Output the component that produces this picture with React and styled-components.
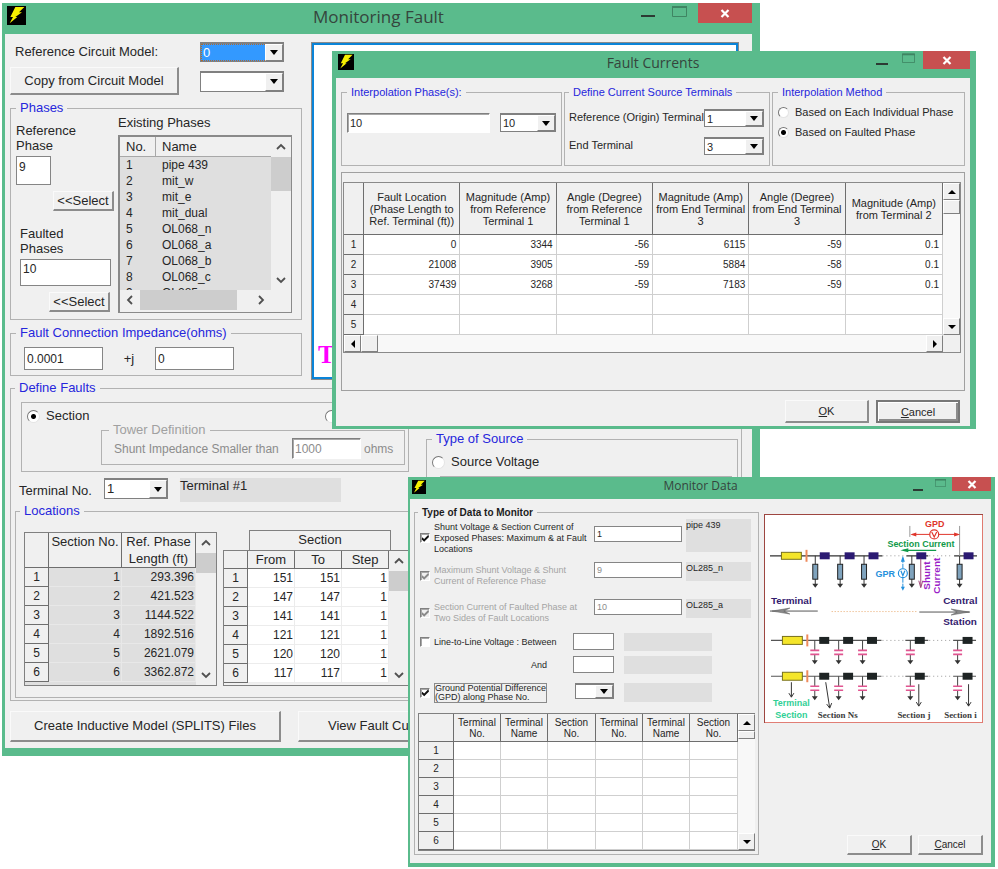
import { useId } from "react";
import styled, { createGlobalStyle, css } from "styled-components";

const existingPhases = [
  "pipe 439",
  "mit_w",
  "mit_e",
  "mit_dual",
  "OL068_n",
  "OL068_a",
  "OL068_b",
  "OL068_c",
  "OL285_n",
];

const refLengths = ["293.396", "421.523", "1144.522", "1892.516", "2621.079", "3362.872"];
const sectionNumbers = [151, 147, 141, 121, 120, 117];

const currentHeaders = [
  "Fault Location (Phase Length to Ref. Terminal (ft))",
  "Magnitude (Amp) from Reference Terminal 1",
  "Angle (Degree) from Reference Terminal 1",
  "Magnitude (Amp) from End Terminal 3",
  "Angle (Degree) from End Terminal 3",
  "Magnitude (Amp) from Terminal 2",
];

const currentRows = [
  ["0", "3344", "-56", "6115", "-59", "0.1"],
  ["21008", "3905", "-59", "5884", "-58", "0.1"],
  ["37439", "3268", "-59", "7183", "-59", "0.1"],
  ["", "", "", "", "", ""],
  ["", "", "", "", "", ""],
];

const monitorHeaders = [
  "Terminal No.",
  "Terminal Name",
  "Section No.",
  "Terminal No.",
  "Terminal Name",
  "Section No.",
];
const monitorRows = Array.from({ length: 6 }, () => ["", "", "", "", "", ""]);

export default function App() {
  return (
    <>
      <GlobalStyle />
      <Desktop>
        <MonitoringFault />
        <FaultCurrents />
        <MonitorData />
      </Desktop>
    </>
  );
}

function Window({ title, children, ...frame }) {
  return (
    <WindowFrame aria-label={title} {...frame}>
      <TitleBar $height={frame.$bar}>
        <BoltIcon size={frame.$icon} />
        <Title $size={frame.$titleSize} $line={frame.$bar - 4}>
          {title}
        </Title>
        <TitleControls $gap={frame.$gap}>
          <TitleButton aria-label="Minimize">
            <svg width={frame.$glyph} height="16" viewBox="0 0 14 16" preserveAspectRatio="none">
              <path d="M0 12h14v2H0z" fill="#2c3a33" />
            </svg>
          </TitleButton>
          <TitleButton aria-label="Maximize">
            <svg width={frame.$glyph + 1} height={frame.$glyph} viewBox="0 0 15 14" preserveAspectRatio="none">
              <path d="M.5 3.500h14v10H.5z" fill="none" stroke="#3f8563" />
              <path d="M0 3h15v2H0z" fill="#3f8563" />
            </svg>
          </TitleButton>
          <CloseButton aria-label="Close" $width={frame.$closeWidth} $height={frame.$closeHeight}>
            <svg width="10" height="9" viewBox="0 0 10 9">
              <path d="M1.500 1l7 7M8.500 1l-7 7" stroke="#fff" strokeWidth="2.200" />
            </svg>
          </CloseButton>
        </TitleControls>
      </TitleBar>
      <WindowBody>{children}</WindowBody>
    </WindowFrame>
  );
}

function BoltIcon({ size }) {
  return (
    <BoltSvg width={size} height={size} viewBox="0 0 57 57">
      <path d="M0 0h57v57H0z" fill="#000" />
      <path d="M25 3h27L36 19h9L25 33h6L8 52l10-19h-8z" fill="#f6f000" />
    </BoltSvg>
  );
}

function Combo({ label, value, id, ...props }) {
  return (
    <ComboFrame {...props}>
      <ComboSelect id={id} aria-label={label} defaultValue={value} $active={props.$active}>
        <option>{value}</option>
      </ComboSelect>
      <ComboArrow>
        <svg width="8" height="5" viewBox="0 0 8 5">
          <path d="M0 0h8L4 5z" fill="#000" />
        </svg>
      </ComboArrow>
    </ComboFrame>
  );
}

const arrowPaths = {
  up: ["M1 7l4-4 4 4", "M1 7h8L5 3z"],
  down: ["M1 3l4 4 4-4", "M1 3h8L5 7z"],
  left: ["M7 1L3 5l4 4", "M7 1v8L3 5z"],
  right: ["M3 1l4 4-4 4", "M3 1v8l4-4z"],
};

function ScrollArrow({ to, classic }) {
  return (
    <ArrowButton aria-label={"Scroll " + to} $classic={classic}>
      <svg width="10" height="10" viewBox="0 0 10 10">
        {classic ? (
          <path d={arrowPaths[to][1]} fill="#000" />
        ) : (
          <path d={arrowPaths[to][0]} fill="none" stroke="#505050" strokeWidth="1.800" />
        )}
      </svg>
    </ArrowButton>
  );
}

function ScrollBar({ horizontal, classic, thumb }) {
  return (
    <ScrollTrack $horizontal={horizontal} $classic={classic}>
      <ScrollArrow to={horizontal ? "left" : "up"} classic={classic} />
      <ScrollLane $horizontal={horizontal}>
        <ScrollThumb $horizontal={horizontal} $classic={classic} $length={thumb} />
      </ScrollLane>
      <ScrollArrow to={horizontal ? "right" : "down"} classic={classic} />
    </ScrollTrack>
  );
}

function DataTable({ label, headers, rows, widths, ...look }) {
  return (
    <Table aria-label={label} {...look}>
      <colgroup>
        {widths.map((width, i) => (
          <col key={i} width={width} />
        ))}
      </colgroup>
      <thead>
        <tr>
          <th />
          {headers.map((header, i) => (
            <th key={i} scope="col">
              {header}
            </th>
          ))}
        </tr>
      </thead>
      <tbody>
        {rows.map((row, i) => (
          <tr key={i}>
            <th scope="row">{i + 1}</th>
            {row.map((cell, j) => (
              <td key={j}>{cell}</td>
            ))}
          </tr>
        ))}
      </tbody>
    </Table>
  );
}

function MonitoringFault() {
  const id = useId();
  return (
    <Window
      title="Monitoring Fault"
      $left={2}
      $top={3}
      $width={758}
      $height={751}
      $edges="0 8px 8px 3px"
      $bar={31}
      $icon={19}
      $titleSize={17}
      $glyph={14}
      $gap={17}
      $closeWidth={54}
      $closeHeight={20}
      $font={13}
      $line={14}
    >
      <FaultBody>
        <FaultTop>
          <PhaseColumn>
            <CircuitGrid>
              <ModelLabel htmlFor={id + "model"}>Reference Circuit Model:</ModelLabel>
              <Combo id={id + "model"} value="0" $width={84} $height={20} $active />
              <Button>Copy from Circuit Model</Button>
              <Combo label="Circuit model to copy" value="" $width={84} $height={21} />
            </CircuitGrid>
            <PhasesGroup>
              <Legend>Phases</Legend>
              <PhaseFields>
                <FieldLabel htmlFor={id + "ref"}>
                  Reference
                  <br />
                  Phase
                </FieldLabel>
                <TextBox id={id + "ref"} defaultValue="9" $width={35} $height={29} />
                <SelectButton>&lt;&lt;Select</SelectButton>
                <FaultedFields>
                  <FieldLabel htmlFor={id + "faulted"}>
                    Faulted
                    <br />
                    Phases
                  </FieldLabel>
                  <TextBox id={id + "faulted"} defaultValue="10" $width={91} $height={27} />
                  <SelectButton>&lt;&lt;Select</SelectButton>
                </FaultedFields>
              </PhaseFields>
              <div>
                <div>Existing Phases</div>
                <PhaseList>
                  <PhaseListBody>
                    <PhaseTable aria-label="Existing Phases">
                      <thead>
                        <tr>
                          <th>No.</th>
                          <th>Name</th>
                        </tr>
                      </thead>
                      <tbody>
                        {existingPhases.map((name, i) => (
                          <tr key={name}>
                            <td>{i + 1}</td>
                            <td>{name}</td>
                          </tr>
                        ))}
                      </tbody>
                    </PhaseTable>
                    <ScrollBar thumb={34} />
                  </PhaseListBody>
                  <ListFooter>
                    <ScrollBar horizontal thumb={97} />
                  </ListFooter>
                </PhaseList>
              </div>
            </PhasesGroup>
            <ImpedanceGroup>
              <Legend>Fault Connection Impedance(ohms)</Legend>
              <ImpedanceFields>
                <TextBox aria-label="Resistance" defaultValue="0.0001" $width={79} $height={23} />
                <span>+j</span>
                <TextBox aria-label="Reactance" defaultValue="0" $width={79} $height={23} />
              </ImpedanceFields>
            </ImpedanceGroup>
          </PhaseColumn>
          <CircuitView>Terminal</CircuitView>
        </FaultTop>

        <DefineGroup>
          <Legend>Define Faults</Legend>
          <div>
            <FaultTypeBox>
              <FaultTypeRow>
                <Choice>
                  <Radio type="radio" name="faultType" defaultChecked />
                  Section
                </Choice>
                <Choice>
                  <Radio type="radio" name="faultType" />
                  Tower
                </Choice>
              </FaultTypeRow>
              <TowerGroup disabled>
                <Legend $muted>Tower Definition</Legend>
                <ShuntFields>
                  <label htmlFor={id + "shunt"}>Shunt Impedance Smaller than</label>
                  <TextBox id={id + "shunt"} defaultValue="1000" $width={69} $height={21} $sunken />
                  <span>ohms</span>
                </ShuntFields>
              </TowerGroup>
            </FaultTypeBox>
            <TerminalRow>
              <label htmlFor={id + "terminal"}>Terminal No.</label>
              <Combo id={id + "terminal"} value="1" $width={64} $height={21} />
              <Readout $width={161} $height={24}>
                Terminal #1
              </Readout>
            </TerminalRow>
            <LocationsGroup>
              <Legend>Locations</Legend>
              <LocationTables>
                <LengthGrid>
                  <DataTable
                    label="Section lengths"
                    headers={["Section No.", "Ref. Phase Length (ft)"]}
                    rows={refLengths.map((length, i) => [i + 1, length])}
                    widths={[24, 73, 74]}
                    $head={35}
                    $row={19}
                    $cell="#dfdfdf"
                    $rule="#e8e8e8"
                    $digits={12}
                    $topHead
                  />
                  <ScrollBar thumb={20} />
                </LengthGrid>
                <SectionColumn>
                  <SectionCaption>Section</SectionCaption>
                  <SectionGrid>
                    <DataTable
                      label="Sections"
                      headers={["From", "To", "Step"]}
                      rows={sectionNumbers.map((n) => [n, n, 1])}
                      widths={[24, 47, 47, 47]}
                      $head={18}
                      $row={19}
                      $cell="#fff"
                      $rule="#ececec"
                      $digits={12}
                    />
                    <ScrollBar thumb={20} />
                  </SectionGrid>
                </SectionColumn>
              </LocationTables>
            </LocationsGroup>
          </div>
          <SourceGroup>
            <Legend>Type of Source</Legend>
            <Choice>
              <Radio type="radio" name="source" />
              Source Voltage
            </Choice>
            <SourceBox />
          </SourceGroup>
        </DefineGroup>

        <FaultActions>
          <Button $width={271}>Create Inductive Model (SPLITS) Files</Button>
          <Button $width={175}>View Fault Currents</Button>
        </FaultActions>
      </FaultBody>
    </Window>
  );
}

function FaultCurrents() {
  const id = useId();
  return (
    <Window
      title="Fault Currents"
      $left={332}
      $top={51}
      $width={644}
      $height={378}
      $edges="0 6px 3px 4px"
      $bar={27}
      $icon={16}
      $titleSize={14}
      $glyph={12}
      $gap={14}
      $closeWidth={47}
      $closeHeight={18}
      $font={11}
      $line={12}
    >
      <CurrentsBody>
        <CurrentsTop>
          <InterpolationGroup>
            <Legend>Interpolation Phase(s):</Legend>
            <InterpolationFields>
              <TextBox aria-label="Interpolation phases" defaultValue="10" $width={143} $height={20} $sunken />
              <Combo label="Phase" value="10" $width={56} $height={19} />
            </InterpolationFields>
          </InterpolationGroup>
          <TerminalsGroup>
            <Legend>Define Current Source Terminals</Legend>
            <label htmlFor={id + "origin"}>Reference (Origin) Terminal</label>
            <Combo id={id + "origin"} value="1" $width={60} $height={18} />
            <label htmlFor={id + "end"}>End Terminal</label>
            <Combo id={id + "end"} value="3" $width={60} $height={18} />
          </TerminalsGroup>
          <MethodGroup>
            <Legend>Interpolation Method</Legend>
            <Choice>
              <Radio type="radio" name="method" $size={11} />
              Based on Each Individual Phase
            </Choice>
            <Choice>
              <Radio type="radio" name="method" $size={11} defaultChecked />
              Based on Faulted Phase
            </Choice>
          </MethodGroup>
        </CurrentsTop>
        <CurrentsPanel>
          <CurrentsGrid>
            <DataTable
              label="Fault currents"
              headers={currentHeaders}
              rows={currentRows}
              widths={[20, 96, 96, 96, 96, 96, 97]}
              $head={52}
              $row={20}
              $cell="#fff"
              $rule="#cfcfcf"
              $digits={10}
              $pad={3}
            />
            <ScrollBar classic thumb={14} />
            <ScrollBar classic horizontal thumb={17} />
          </CurrentsGrid>
        </CurrentsPanel>
        <CurrentsActions>
          <Button $width={84}>
            <u>O</u>K
          </Button>
          <Button $width={84} $default>
            <u>C</u>ancel
          </Button>
        </CurrentsActions>
      </CurrentsBody>
    </Window>
  );
}

function MonitorData() {
  const id = useId();
  return (
    <Window
      title="Monitor Data"
      $left={408}
      $top={477}
      $width={587}
      $height={388}
      $edges="0 4px 4px 2px"
      $bar={22}
      $icon={14}
      $titleSize={12}
      $glyph={10}
      $gap={12}
      $closeWidth={39}
      $closeHeight={14}
      $font={10}
      $line={11}
    >
      <MonitorBody>
        <DataGroup>
          <Legend $strong>Type of Data to Monitor</Legend>
          <MonitorRow $height={38}>
            <MonitorChoice>
              <Check type="checkbox" defaultChecked />
              <span>
                Shunt Voltage &amp; Section Current of
                <br />
                Exposed Phases: Maximum &amp; at Fault
                <br />
                Locations
              </span>
            </MonitorChoice>
            <TextBox aria-label="Exposed phase" defaultValue="1" $width={88} $height={16} $drop={7} />
            <Readout $width={65} $height={33}>
              pipe 439
            </Readout>
          </MonitorRow>
          <MonitorRow $height={28} $space={5}>
            <MonitorChoice $muted>
              <Check type="checkbox" defaultChecked disabled />
              <span>
                Maximum Shunt Voltage &amp; Shunt
                <br />
                Current of Reference Phase
              </span>
            </MonitorChoice>
            <TextBox aria-label="Reference phase" defaultValue="9" disabled $width={88} $height={16} />
            <Readout $width={65} $height={19}>
              OL285_n
            </Readout>
          </MonitorRow>
          <MonitorRow $height={28} $space={9}>
            <MonitorChoice $muted>
              <Check type="checkbox" defaultChecked disabled />
              <span>
                Section Current of Faulted Phase at
                <br />
                Two Sides of Fault Locations
              </span>
            </MonitorChoice>
            <TextBox aria-label="Faulted phase" defaultValue="10" disabled $width={88} $height={16} />
            <Readout $width={65} $height={19}>
              OL285_a
            </Readout>
          </MonitorRow>
          <MonitorRow $height={18} $space={6} $short>
            <MonitorChoice>
              <Check type="checkbox" />
              <span>Line-to-Line Voltage : Between</span>
            </MonitorChoice>
            <TextBox aria-label="First phase" $width={41} $height={17} />
            <Readout $width={88} $height={18} />
          </MonitorRow>
          <MonitorRow $height={18} $space={5} $short>
            <AndLabel htmlFor={id + "and"}>And</AndLabel>
            <TextBox id={id + "and"} $width={41} $height={17} />
            <Readout $width={88} $height={18} />
          </MonitorRow>
          <MonitorRow $height={19} $space={9} $short>
            <MonitorChoice>
              <Check type="checkbox" defaultChecked />
              <FocusText>
                Ground Potential Difference
                <br />
                (GPD) along Phase No.
              </FocusText>
            </MonitorChoice>
            <Combo label="Phase number" value="" $width={39} $height={16} />
            <Readout $width={88} $height={19} />
          </MonitorRow>
          <MonitorGrid>
            <DataTable
              label="Monitored sections"
              headers={monitorHeaders}
              rows={monitorRows}
              widths={[35, 47, 47, 48, 47, 47, 48]}
              $head={28}
              $row={18}
              $cell="#fff"
              $rule="#cfcfcf"
              $digits={10}
            />
            <ScrollBar classic thumb={8} />
          </MonitorGrid>
        </DataGroup>
        <MonitorSide>
          <CircuitDiagram />
          <MonitorActions>
            <Button $width={65}>
              <u>O</u>K
            </Button>
            <Button $width={65}>
              <u>C</u>ancel
            </Button>
          </MonitorActions>
        </MonitorSide>
      </MonitorBody>
    </Window>
  );
}

// One conductor of the diagram with its capacitive shunts
function CapacitorLine({ y, drop }) {
  return (
    <g>
      <path d={`M7 ${y}H118M142 ${y}h23M190 ${y}h23`} stroke="#555" strokeWidth="1.200" />
      <path d={`M119 ${y}h22M166 ${y}h23`} stroke="#999" strokeDasharray="1 3" />
      <rect x="18.500" y={y - 4} width="20" height="8" fill="#f4e52a" stroke="#77701c" />
      <path d={`M43.500 ${y - 6}v12`} stroke="#ee8a5c" strokeWidth="2" />
      {[55.5, 79.5, 103.5, 151.5, 199.5].map((x) => (
        <rect key={x} x={x} y={y - 3.5} width="10" height="7" fill="#1e2424" />
      ))}
      {[51, 75, 99, 147, 194.5].map((x) => (
        <g key={x}>
          <path d={`M${x} ${y}v${drop}M${x} ${y + drop + 4}v7`} stroke="#444" />
          <path
            d={`M${x - 4.5} ${y + drop}h9M${x - 4.5} ${y + drop + 4}h9`}
            stroke="#e05590"
            strokeWidth="1.600"
          />
          <path d={`M${x - 3} ${y + drop + 10}h6l-3 4z`} fill="#333" />
        </g>
      ))}
    </g>
  );
}

function CircuitDiagram() {
  return (
    <DiagramSvg viewBox="0 0 220 210" role="img" aria-label="Circuit diagram">
      <rect x=".5" y=".5" width="219" height="209" fill="#fff" stroke="#e07a70" />
      <path d="M0 .5h220M.5 0v210" stroke="#9c4640" />

      <path d="M6 42h113M143 42h22M191 42h23" stroke="#333" strokeWidth="1.200" />
      <path d="M119 42h22M166 42h24" stroke="#999" strokeDasharray="1 3" />
      <rect x="17.500" y="38.500" width="20" height="7" fill="#f4e52a" stroke="#77701c" />
      <path d="M42.700 36v12" stroke="#ee8a5c" strokeWidth="2" />
      {[56, 81, 105, 153, 200.5].map((x) => (
        <rect key={x} x={x} y="38.500" width="10" height="7" fill="#2b1a72" />
      ))}
      {[51.5, 76.5, 100.5, 148.5, 196.5].map((x) => (
        <g key={x}>
          <path d={`M${x} 42v30`} stroke="#333" />
          <rect x={x - 2.5} y="50.500" width="5" height="15" fill="#7fa3bd" stroke="#222" />
          <path d={`M${x - 3} 70h6l-3 4z`} fill="#333" />
        </g>
      ))}

      <path d="M146.500 12v11M196.500 12v30" stroke="#999" />
      <path d="M149 20.500h46" stroke="#e0352b" />
      <path d="M147 20.500l6-2v4zM197 20.500l-6-2v4z" fill="#e0352b" />
      <circle cx="171" cy="20.500" r="4.500" fill="#fff" stroke="#e0352b" strokeWidth="1.200" />
      <path d="M168.500 18l2.500 5 2.500-5" fill="none" stroke="#e0352b" strokeWidth="1.200" />
      <DiagramText x="171.500" y="13" $color="#e0352b" $center>
        GPD
      </DiagramText>
      <DiagramText x="124" y="33" $color="#109a4a">
        Section Current
      </DiagramText>
      <path d="M140 36.500h33" stroke="#109a4a" strokeWidth="1.200" />
      <path d="M137 36.500l8-2v4z" fill="#109a4a" />

      <DiagramText x="112" y="63" $color="#2590dc">
        GPR
      </DiagramText>
      <path d="M139.500 44v12M139.500 64v11" stroke="#2590dc" strokeDasharray="5 1" />
      <path d="M139.500 42l-2 6h4zM139.500 77l-2-4h4z" fill="#2590dc" />
      <circle cx="139.500" cy="59.500" r="4.500" fill="#fff" stroke="#2590dc" strokeWidth="1.200" />
      <path d="M137.500 57l2 5 2-5" fill="none" stroke="#2590dc" strokeWidth="1.200" />

      <path d="M157.500 45v28M155.500 67l2 7 2-7" fill="none" stroke="#a04878" />
      <DiagramText transform="translate(167 76) rotate(-90)" $color="#9a1fc8" $size={10}>
        Shunt
      </DiagramText>
      <DiagramText transform="translate(177 80) rotate(-90)" $color="#9a1fc8" $size={10}>
        Current
      </DiagramText>

      <DiagramText x="7" y="90" $color="#33206e" $size={10}>
        Terminal
      </DiagramText>
      <DiagramText x="180" y="90" $color="#33206e" $size={10}>
        Central
      </DiagramText>
      <DiagramText x="180" y="112" $color="#33206e" $size={10}>
        Station
      </DiagramText>
      <path d="M6 97.500h48M156 98.500h51" stroke="#555" />
      <path d="M8 97.500l18-3-6 3 6 3zM206 98.500l-18-3 6 3-6 3z" fill="#888" stroke="#555" strokeWidth=".5" />
      <path d="M68 98h87" stroke="#e8a86c" strokeDasharray="1 2" />

      <CapacitorLine y={127} drop={10} />
      <CapacitorLine y={163} drop={10} />

      <g fill="none" stroke="#333">
        <path d="M27.500 169v15M25 180l2.500 4 2.500-4" />
        <path d="M62 169l4 26M63 191l3 4 2-5" />
        <path d="M155.500 171v22M153 189l2.500 4 2.500-4" />
        <path d="M205.500 171v22M203 189l2.500 4 2.500-4" />
      </g>
      <DiagramText x="27.500" y="193" $color="#2fcf95" $center>
        Terminal
      </DiagramText>
      <DiagramText x="27.500" y="205" $color="#2fcf95" $center>
        Section
      </DiagramText>
      <DiagramText x="54" y="205" $color="#3a3a3a" $serif>
        Section Ns
      </DiagramText>
      <DiagramText x="134" y="205" $color="#3a3a3a" $serif>
        Section j
      </DiagramText>
      <DiagramText x="181" y="205" $color="#3a3a3a" $serif>
        Section i
      </DiagramText>
    </DiagramSvg>
  );
}

const GlobalStyle = createGlobalStyle`
  * {
    box-sizing: border-box;
  }

  body {
    margin: 0;
    background: #fff;
    color: #262626;
    font-family: "Liberation Sans", Arial, sans-serif;
  }

  button, input, select {
    margin: 0;
    padding: 0;
    color: inherit;
    font: inherit;
  }
`;

const sunken = css`
  border: 1px solid;
  border-color: #808080 #fff #fff #808080;
  box-shadow: inset 1px 1px 0 #a8a8a8;
`;

const Desktop = styled.main`
  position: relative;
  min-height: 100vh;
  overflow: hidden;
`;

const WindowFrame = styled.section`
  position: absolute;
  left: ${(props) => props.$left}px;
  top: ${(props) => props.$top}px;
  width: ${(props) => props.$width}px;
  min-height: ${(props) => props.$height}px;
  display: flex;
  flex-direction: column;
  border: solid #5abb8c;
  border-width: ${(props) => props.$edges};
  background: #f0f0f0;
  font-size: ${(props) => props.$font}px;
  line-height: ${(props) => props.$line}px;
`;

const TitleBar = styled.header`
  height: ${(props) => props.$height}px;
  display: grid;
  grid-template-columns: 1fr auto 1fr;
  background: #5abb8c;
`;

const BoltSvg = styled.svg`
  margin: 3px 2px;
`;

const Title = styled.h1`
  margin: 0;
  color: #35453d;
  font: ${(props) => props.$size}px "Open Sans", sans-serif;
  line-height: ${(props) => props.$line}px;
`;

const TitleControls = styled.div`
  display: flex;
  justify-content: flex-end;
  align-items: flex-start;
  gap: ${(props) => props.$gap}px;
`;

const TitleButton = styled.button`
  display: flex;
  border: 0;
  background: none;
`;

const CloseButton = styled(TitleButton)`
  width: ${(props) => props.$width}px;
  height: ${(props) => props.$height}px;
  margin-left: -6px;
  align-items: center;
  justify-content: center;
  background: #c75050;
`;

const WindowBody = styled.div`
  flex: 1;
  display: flex;
  flex-direction: column;
`;

const Group = styled.fieldset`
  min-width: 0;
  margin: 0;
  padding: 0;
  border: 1px solid #b2b2b2;
`;

const Legend = styled.legend`
  padding: 0 4px;
  color: ${(props) => (props.$muted ? "#a0a0a0" : props.$strong ? "#1c1c1c" : "#2626dc")};
  font-weight: ${(props) => (props.$strong ? "bold" : "normal")};
`;

const Button = styled.button`
  width: ${(props) => (props.$width ? props.$width + "px" : "auto")};
  border: solid;
  border-width: 1px 2px 2px 1px;
  border-color: #fafafa #8c8c8c #8c8c8c #fafafa;
  background: #f0f0f0;
  white-space: nowrap;
  ${(props) =>
    props.$default &&
    css`
      border-width: 2px;
      border-color: #777;
      box-shadow: inset 1px 1px 0 #fff, inset -2px -2px 0 #8c8c8c;
    `}
`;

const TextBox = styled.input`
  width: ${(props) => props.$width}px;
  height: ${(props) => props.$height}px;
  margin-top: ${(props) => props.$drop || 0}px;
  padding: 0 2px;
  border: 1px solid #858585;
  background: #fff;
  ${(props) => props.$sunken && sunken}

  &:disabled {
    color: #8c8c8c;
  }
`;

const ComboFrame = styled.span`
  width: ${(props) => props.$width}px;
  height: ${(props) => props.$height}px;
  display: grid;
  border: 1px solid #808080;
  border-top-width: 2px;
  background: #fff;
`;

const ComboSelect = styled.select`
  grid-area: 1 / 1;
  width: 100%;
  min-width: 0;
  padding: 0 2px;
  appearance: none;
  border: 0;
  border-radius: 0;
  background: ${(props) => (props.$active ? "#3399ff" : "#fff")};
  color: ${(props) => (props.$active ? "#fff" : "inherit")};
  outline: ${(props) => (props.$active ? "1px dotted #b06a30" : "none")};
  outline-offset: -1px;
`;

const ComboArrow = styled.span`
  grid-area: 1 / 1;
  justify-self: end;
  width: 18px;
  display: flex;
  align-items: center;
  justify-content: center;
  border: 1px solid;
  border-color: #fff #808080 #808080 #fff;
  background: #f0f0f0;
  pointer-events: none;
`;

const Choice = styled.label`
  display: flex;
  align-items: center;
  gap: 6px;
`;

const Radio = styled.input`
  flex: none;
  width: ${(props) => props.$size || 13}px;
  height: ${(props) => props.$size || 13}px;
  appearance: none;
  border: 1px solid;
  border-color: #777 #e4e4e4 #e4e4e4 #777;
  border-radius: 50%;
  background: #fff;

  &:checked {
    background: radial-gradient(circle, #000 0 2px, #fff 3px);
  }
`;

const Check = styled.input`
  flex: none;
  width: 10px;
  height: 10px;
  display: flex;
  appearance: none;
  ${sunken}
  background: #fff;

  &:checked::before {
    content: "";
    width: 8px;
    height: 8px;
    background: #111;
    clip-path: polygon(14% 40%, 40% 62%, 92% 10%, 100% 36%, 40% 96%, 10% 68%);
  }

  &:disabled {
    background: #f0f0f0;
  }

  &:disabled::before {
    background: #8a8a8a;
  }
`;

const Readout = styled.output`
  width: ${(props) => props.$width}px;
  height: ${(props) => props.$height}px;
  padding-top: 1px;
  background: #dfdfdf;
`;

const ScrollTrack = styled.div`
  display: flex;
  flex-direction: ${(props) => (props.$horizontal ? "row" : "column")};
  ${(props) => (props.$horizontal ? "height" : "width")}: ${(props) => (props.$classic ? 17 : 20)}px;
  background: ${(props) => (props.$classic ? "#f8f8f8" : "#f0f0f0")};
`;

const ScrollLane = styled.div`
  flex: 1;
  display: flex;
  flex-direction: ${(props) => (props.$horizontal ? "row" : "column")};
`;

const ScrollThumb = styled.div`
  ${(props) => (props.$horizontal ? "width" : "height")}: ${(props) => props.$length}px;
  background: #cdcdcd;
  ${(props) =>
    props.$classic &&
    css`
      border: 1px solid;
      border-color: #fff #808080 #808080 #fff;
      background: #f0f0f0;
    `}
`;

const ArrowButton = styled.button`
  width: ${(props) => (props.$classic ? 17 : 20)}px;
  height: ${(props) => (props.$classic ? 17 : 20)}px;
  display: flex;
  align-items: center;
  justify-content: center;
  border: ${(props) => (props.$classic ? 1 : 0)}px solid;
  border-color: #fff #808080 #808080 #fff;
  background: #f0f0f0;
`;

const Table = styled.table`
  align-self: start;
  width: 100%;
  table-layout: fixed;
  border-collapse: separate;
  border-spacing: 0;

  th, td {
    padding: 0;
    border: solid;
    border-width: 0 1px 1px 0;
    overflow: hidden;
  }

  th {
    border-color: #6e6e6e;
    background: #f0f0f0;
    font-weight: normal;
  }

  thead th {
    height: ${(props) => props.$head}px;
    vertical-align: ${(props) => (props.$topHead ? "top" : "middle")};
    line-height: ${(props) => (props.$topHead ? "17px" : "inherit")};
  }

  tbody tr {
    height: ${(props) => props.$row}px;
  }

  tbody th, td {
    font-size: ${(props) => props.$digits}px;
  }

  td {
    padding-right: ${(props) => props.$pad || 1}px;
    border-color: ${(props) => props.$rule};
    background: ${(props) => props.$cell};
    text-align: right;
  }
`;

/* Monitoring Fault */

const FaultBody = styled.div`
  padding: 8px 10px 6px 5px;

  input {
    font-size: 12px;
  }
`;

const FaultTop = styled.div`
  display: flex;
  gap: 9px;
  min-height: 338px;
`;

const PhaseColumn = styled.div`
  width: 292px;
`;

const CircuitGrid = styled.div`
  display: grid;
  grid-template-columns: 169px 84px;
  grid-template-rows: 20px 28px;
  gap: 5px 21px;
  align-items: center;

  button {
    height: 100%;
  }
`;

const ModelLabel = styled.label`
  padding-left: 5px;
`;

const PhasesGroup = styled(Group)`
  display: grid;
  grid-template-columns: 98px 1fr;
  gap: 4px;
  margin-top: 6px;
  padding: 1px 9px 6px 5px;
`;

const PhaseFields = styled.div`
  display: flex;
  flex-direction: column;
  align-items: flex-start;
  padding-top: 7px;

  input {
    padding-bottom: 8px;
  }
`;

const FaultedFields = styled.div`
  width: 94px;
  display: flex;
  flex-direction: column;
  align-items: flex-start;
  margin: 15px 0 0 4px;
  padding-right: 4px;
`;

const FieldLabel = styled.label`
  margin-bottom: 3px;
  line-height: 15px;
`;

const SelectButton = styled(Button)`
  align-self: flex-end;
  width: 61px;
  height: 20px;
  margin-top: 6px;
`;

const PhaseList = styled.div`
  margin-top: 5px;
  border: 2px solid #8a8a8a;
  border-width: 2px 1px 1px 2px;
`;

const PhaseListBody = styled.div`
  height: 153px;
  display: grid;
  grid-template-columns: 1fr 20px;
  grid-template-rows: 100%;
  overflow: hidden;
`;

const PhaseTable = styled.table`
  align-self: start;
  width: 100%;
  border-collapse: separate;
  border-spacing: 0;
  background: #dfdfdf;
  line-height: 16px;

  th {
    height: 20px;
    padding: 0 6px;
    border-right: 1px solid #a8a8a8;
    border-bottom: 1px solid #a8a8a8;
    background: #f0f0f0;
    font-weight: normal;
    text-align: left;
  }

  th:first-child {
    width: 36px;
  }

  th:last-child {
    border-right: 0;
  }

  td {
    padding: 0 6px;
    font-size: 12px;
  }
`;

const ListFooter = styled.div`
  height: 22px;
  padding-right: 20px;
`;

const ImpedanceGroup = styled(Group)`
  padding: 7px 5px 5px;
  margin-top: 6px;
`;

const ImpedanceFields = styled.div`
  display: flex;
  align-items: center;
  margin-left: 8px;

  span {
    width: 52px;
    text-align: center;
  }
`;

const CircuitView = styled.div`
  flex: 1;
  margin-right: 3px;
  padding: 0 4px 10px;
  display: flex;
  align-items: flex-end;
  border: 3px solid #0a84d8;
  outline: 1px solid #8a8a8a;
  outline-offset: -1px;
  background: #fff;
  color: #ff00ff;
  font: bold 25px "Liberation Serif", serif;
  line-height: 25px;
`;

const DefineGroup = styled(Group)`
  display: flex;
  gap: 11px;
  margin-top: 1px;
  padding: 7px 3px 2px 4px;
`;

const FaultTypeBox = styled.div`
  width: 388px;
  margin-left: 6px;
  padding: 6px 3px 6px 5px;
  border: 1px solid #b2b2b2;
`;

const FaultTypeRow = styled.div`
  display: flex;
  gap: 236px;
`;

const TowerGroup = styled(Group)`
  margin-left: 74px;
  padding: 1px 4px 5px 7px;
  color: #8c8c8c;
  white-space: nowrap;
`;

const ShuntFields = styled.div`
  display: flex;
  align-items: center;
  margin-left: 5px;
  font-size: 12px;

  label {
    width: 178px;
  }

  span {
    margin-left: 3px;
  }
`;

const TerminalRow = styled.div`
  display: flex;
  gap: 12px;
  margin: 6px 0 2px 4px;

  label {
    padding-top: 6px;
  }
`;

const LocationsGroup = styled(Group)`
  width: 400px;
  padding: 12px 4px 11px;
`;

const LocationTables = styled.div`
  display: flex;
  gap: 6px;
  margin-left: 4px;
`;

const LengthGrid = styled.div`
  height: 154px;
  margin-top: 2px;
  display: grid;
  grid-template-columns: 171px 20px;
  grid-template-rows: 100%;
  border: 1px solid #808080;
  background: #dfdfdf;
`;

const SectionColumn = styled.div`
  width: 187px;
`;

const SectionCaption = styled.div`
  width: 142px;
  height: 20px;
  margin-left: 26px;
  border: solid #808080;
  border-width: 1px 1px 0;
  line-height: 18px;
  text-align: center;
`;

const SectionGrid = styled.div`
  height: 136px;
  display: grid;
  grid-template-columns: 165px 20px;
  grid-template-rows: 100%;
  border: 1px solid #808080;
  background: #f0f0f0;
`;

const SourceGroup = styled(Group)`
  flex: 1;
  margin-top: 30px;
  padding: 9px 5px 6px;
`;

const SourceBox = styled.div`
  height: 180px;
  margin: 7px 0 0 8px;
  border: 1px solid #b2b2b2;
`;

const FaultActions = styled.div`
  display: flex;
  gap: 17px;
  margin-top: 10px;

  button {
    height: 31px;
  }
`;

/* Fault Currents */

const CurrentsBody = styled.div`
  padding: 8px 5px 3px;
`;

const CurrentsTop = styled.div`
  display: grid;
  grid-template-columns: 221px 206px 1fr;
  gap: 2px;
`;

const InterpolationGroup = styled(Group)`
  padding: 15px 5px 32px;
`;

const InterpolationFields = styled.div`
  display: flex;
  justify-content: space-between;
`;

const TerminalsGroup = styled(Group)`
  display: grid;
  grid-template-columns: 1fr 60px;
  gap: 10px 0;
  align-content: start;
  padding: 11px 5px 0 4px;
  white-space: nowrap;

  label {
    padding-top: 2px;
  }
`;

const MethodGroup = styled(Group)`
  padding: 8px 5px 0;

  label + label {
    margin-top: 8px;
  }
`;

const CurrentsPanel = styled.div`
  margin-top: 6px;
  padding: 9px 3px 37px 1px;
  border: 1px solid #a0a0a0;
`;

const CurrentsGrid = styled.div`
  display: grid;
  grid-template-columns: 1fr 17px;
  border: 1px solid #8a8a8a;
`;

const CurrentsActions = styled.div`
  display: flex;
  justify-content: flex-end;
  gap: 7px;
  margin-top: 9px;
  padding-right: 5px;

  button {
    height: 23px;
  }
`;

/* Monitor Data */

const MonitorBody = styled.div`
  flex: 1;
  display: flex;
  gap: 5px;
  padding: 8px 8px 8px 4px;
`;

const DataGroup = styled(Group)`
  width: 345px;
  padding: 1px 3px 3px;
`;

const MonitorRow = styled.div`
  height: ${(props) => props.$height}px;
  display: flex;
  align-items: flex-start;
  gap: ${(props) => (props.$short ? 10 : 4)}px;
  margin-top: ${(props) => props.$space || 0}px;
  padding: 0 ${(props) => (props.$short ? 43 : 4)}px 0 2px;
  font-size: 9px;
  white-space: nowrap;
`;

const MonitorChoice = styled.label`
  flex: 1;
  align-self: center;
  display: flex;
  align-items: center;
  gap: 4px;
  color: ${(props) => (props.$muted ? "#a4a4a4" : "inherit")};
`;

const FocusText = styled.span`
  height: 20px;
  line-height: 9px;
  border: 1px solid #8a8a8a;
`;

const AndLabel = styled.label`
  flex: 1;
  align-self: center;
  padding-right: 16px;
  text-align: right;
`;

const MonitorGrid = styled.div`
  display: grid;
  grid-template-columns: 1fr 17px;
  margin-top: 11px;
  border: 1px solid #808080;
`;

const MonitorSide = styled.div`
  flex: 1;
  display: flex;
  flex-direction: column;
  justify-content: space-between;
  padding-top: 7px;
`;

const DiagramSvg = styled.svg`
  width: 100%;
`;

const DiagramText = styled.text`
  fill: ${(props) => props.$color};
  font: bold ${(props) => props.$size || 9}px ${(props) => (props.$serif ? '"Liberation Serif", serif' : '"Liberation Sans", sans-serif')};
  text-anchor: ${(props) => (props.$center ? "middle" : "start")};
`;

const MonitorActions = styled.div`
  display: flex;
  justify-content: flex-end;
  gap: 6px;

  button {
    height: 20px;
  }
`;
